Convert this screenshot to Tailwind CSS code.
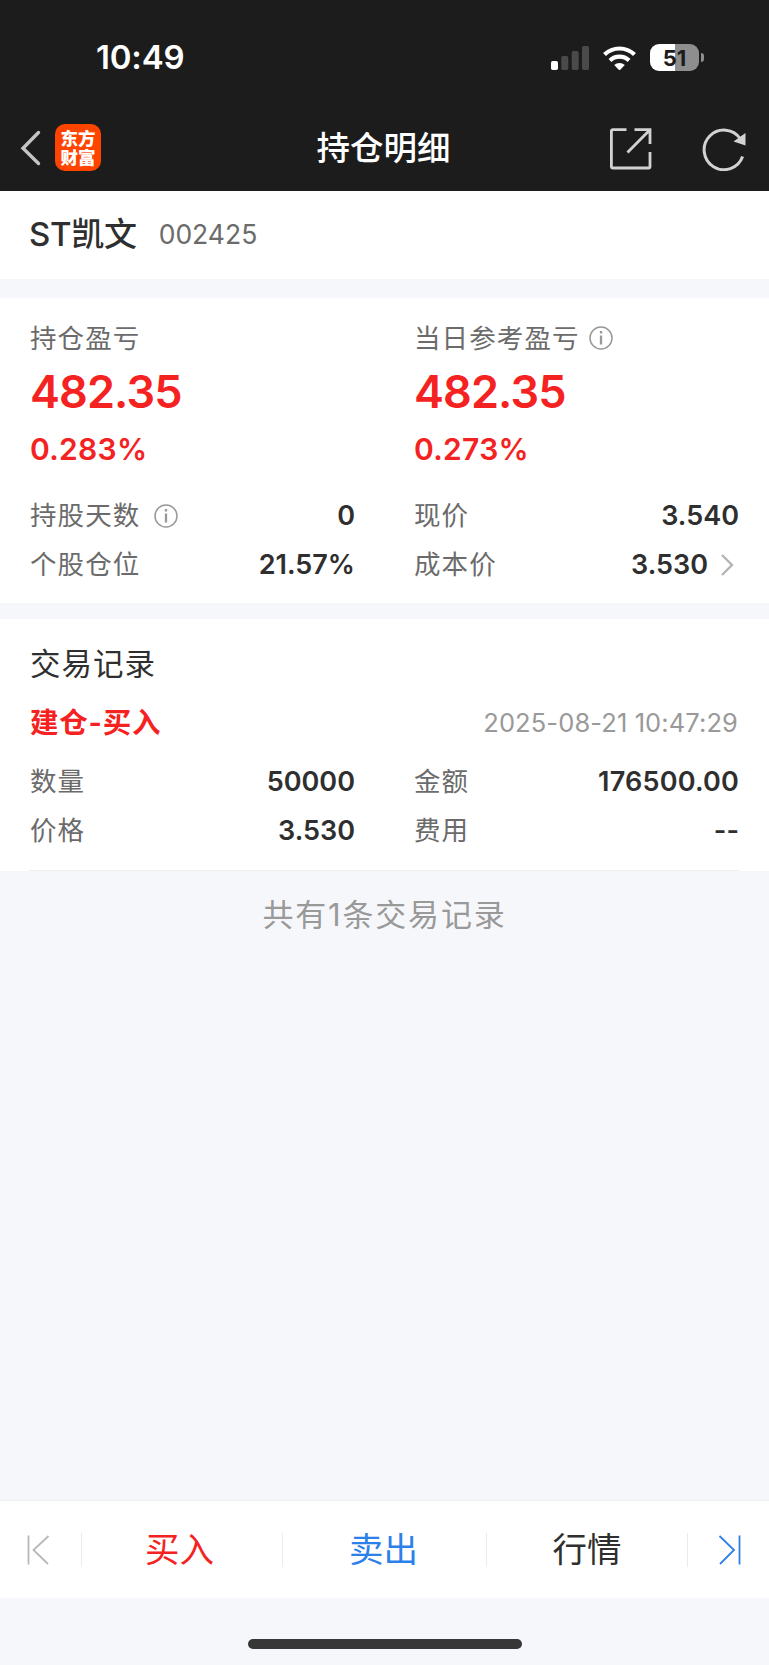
<!DOCTYPE html>
<html lang="zh-CN">

<head>
    <meta charset="UTF-8">
    <meta name="viewport" content="width=device-width, initial-scale=1.0">
    <title>持仓明细</title>
    <script src="https://cdn.jsdelivr.net/npm/@tailwindcss/browser@4"></script>
</head>

<body class="bg-[#f6f7fa]">
    <div class="flex flex-col w-[769px] h-[1665px] overflow-hidden bg-[#f6f7fa] text-[#2f2f2f] leading-none font-[Inter,'Noto_Sans_CJK_SC',sans-serif]">
        <header class="h-[191px] bg-[#1c1c1c] text-white">
            <!-- 状态栏 -->
            <div class="flex items-center justify-between h-[105px] pt-[10px] pl-[96px] pr-[65px]">
                <span class="text-[33px] font-semibold tracking-[-0.2px]">10:49</span>
                <div class="flex items-center">
                    <svg width="38" height="24" viewBox="0 0 38 24">
                        <rect x="0" y="15" width="7" height="9" rx="1.8" fill="#fff" />
                        <rect x="10.3" y="10" width="7" height="14" rx="1.8" fill="#4a4a4a" />
                        <rect x="20.7" y="5" width="7" height="19" rx="1.8" fill="#4a4a4a" />
                        <rect x="31" y="0" width="7" height="24" rx="1.8" fill="#4a4a4a" />
                    </svg>
                    <svg class="ml-[14px]" width="33" height="24" viewBox="0 0 33 24" fill="none" stroke="#fff" stroke-width="4.2">
                        <path d="M1.5 8.6A21.5 21.5 0 0 1 31.5 8.6" />
                        <path d="M7 14.4A13.6 13.6 0 0 1 26 14.4" />
                        <path d="M16.5 24.5L11.2 19.1A7.8 7.8 0 0 1 21.8 19.1Z" fill="#fff" stroke="none" />
                    </svg>
                    <div class="ml-[14px] flex items-center justify-center w-[49px] h-[27px] rounded-[9px] bg-linear-to-r from-white from-51% to-[#8e8e8e] to-51% text-[#1c1c1c] text-[22px] font-bold">51</div>
                    <div class="ml-[2px] w-[3px] h-[9px] rounded-r-full bg-[#8e8e8e]"></div>
                </div>
            </div>
            <!-- 标题栏 -->
            <div class="grid grid-cols-3 items-center h-[86px] pl-[20px] pr-[22px]">
                <div class="flex items-center">
                    <svg width="21" height="36" viewBox="0 0 21 36" fill="none" stroke="#c4c4c4" stroke-width="3.4" stroke-linecap="round">
                        <path d="M18.5 2.5L3 18.3L18.5 33.5" />
                    </svg>
                    <div class="ml-[14px] -mt-px flex flex-col items-center justify-center w-[46px] h-[47px] rounded-[10px] bg-[#ff4400] text-[17.5px] leading-[19px] font-black">
                        <span>东方</span>
                        <span>财富</span>
                    </div>
                </div>
                <h1 class="pt-px text-center text-[33.5px] font-medium">持仓明细</h1>
                <div class="flex items-center justify-end gap-[49px] pt-px">
                    <svg width="44" height="44" viewBox="0 0 44 44" fill="none" stroke="#d2d2d2" stroke-width="2.8">
                        <path d="M18.5 2.7H5Q3.4 2.7 3.4 4.3V39.5Q3.4 41 5 41H40.5Q42 41 42 39.5V25M42 17V2.7H26.5M42 2.7L19.5 25.5" />
                    </svg>
                    <svg width="46" height="44" viewBox="0 0 46 44" fill="none" stroke="#d2d2d2" stroke-width="3">
                        <path d="M41.6 29.5A19.8 19.8 0 1 1 39.5 12" />
                        <path d="M44.5 6V18.5L32.5 14.5Z" fill="#d2d2d2" stroke="none" />
                    </svg>
                </div>
            </div>
        </header>

        <!-- 股票名称 -->
        <section class="flex items-center h-[88px] pb-[2px] pl-[29px] bg-white">
            <h2 class="text-[33px] font-medium tracking-[-0.3px]">ST凯文</h2>
            <span class="ml-[22px] text-[26.5px] text-[#6b6b6b]">002425</span>
        </section>

        <!-- 盈亏 -->
        <section class="grid grid-cols-2 gap-x-[59px] mt-[19px] pt-5 pb-[14px] pl-[30px] pr-[30px] bg-white text-[27px]">
            <div>
                <div class="flex items-center h-10 pt-px text-[26.5px] text-[#6b6b6b] tracking-[1.1px]">持仓盈亏</div>
                <div class="flex items-center h-[68px] pb-[2px] text-[45px] font-semibold tracking-[-0.9px] text-[#f52222]">482.35</div>
                <div class="flex items-center h-[46px] text-[30px] font-semibold tracking-[0.3px] text-[#f52222]">0.283%</div>
                <div class="flex items-center justify-between h-[49px] mt-[19px]">
                    <span class="flex items-center text-[26.5px] text-[#6b6b6b] tracking-[1.1px]">持股天数
                        <svg class="ml-[14px]" width="24" height="24" viewBox="0 0 24 24" fill="none" stroke="#999" stroke-width="1.5">
                            <circle cx="12" cy="12" r="11" />
                            <path d="M12 9.5V18.5M12 5V7.5" stroke-width="2.3" />
                        </svg>
                    </span>
                    <span class="font-semibold">0</span>
                </div>
                <div class="flex items-center justify-between h-[49px]">
                    <span class="text-[26.5px] text-[#6b6b6b] tracking-[1.1px]">个股仓位</span>
                    <span class="font-semibold">21.57%</span>
                </div>
            </div>
            <div>
                <div class="flex items-center h-10 pt-px text-[26.5px] text-[#6b6b6b] tracking-[1.1px]">当日参考盈亏
                    <svg class="ml-[9px] -mt-px" width="24" height="24" viewBox="0 0 24 24" fill="none" stroke="#999" stroke-width="1.5">
                        <circle cx="12" cy="12" r="11" />
                        <path d="M12 9.5V18.5M12 5V7.5" stroke-width="2.3" />
                    </svg>
                </div>
                <div class="flex items-center h-[68px] pb-[2px] text-[45px] font-semibold tracking-[-0.9px] text-[#f52222]">482.35</div>
                <div class="flex items-center h-[46px] text-[30px] font-semibold tracking-[0.3px] text-[#f52222]">0.273%</div>
                <div class="flex items-center justify-between h-[49px] mt-[19px]">
                    <span class="text-[26.5px] text-[#6b6b6b] tracking-[1.1px]">现价</span>
                    <span class="font-semibold">3.540</span>
                </div>
                <div class="flex items-center justify-between h-[49px]">
                    <span class="text-[26.5px] text-[#6b6b6b] tracking-[1.1px]">成本价</span>
                    <span class="flex items-center font-semibold">3.530
                        <svg class="ml-[12px] mr-[5px]" width="14" height="22" viewBox="0 0 14 22" fill="none" stroke="#b4b4b4" stroke-width="2.4">
                            <path d="M2 1L12 11L2 21" />
                        </svg>
                    </span>
                </div>
            </div>
        </section>

        <!-- 交易记录 -->
        <section class="mt-4 h-[252px] pl-[30px] pr-[30px] bg-white text-[27px]">
            <h3 class="flex items-center h-[90px] text-[30.5px] tracking-[1px]">交易记录</h3>
            <div class="flex items-center justify-between h-7">
                <span class="pt-px text-[28.5px] font-bold tracking-[0.8px] text-[#f52222]">建仓-买入</span>
                <span class="pr-px text-[25.5px] tracking-[0.1px] text-[#999]">2025-08-21 10:47:29</span>
            </div>
            <div class="grid grid-cols-2 gap-x-[59px] mt-[19px] -mx-px px-px pt-px h-[115px] content-start border-b border-[#eeeff1]">
                <div class="flex items-center justify-between h-[49px]">
                    <span class="text-[26.5px] text-[#6b6b6b] tracking-[1.1px]">数量</span>
                    <span class="font-semibold">50000</span>
                </div>
                <div class="flex items-center justify-between h-[49px]">
                    <span class="text-[26.5px] text-[#6b6b6b] tracking-[1.1px]">金额</span>
                    <span class="font-semibold tracking-[0.2px]">176500.00</span>
                </div>
                <div class="flex items-center justify-between h-[49px]">
                    <span class="text-[26.5px] text-[#6b6b6b] tracking-[1.1px]">价格</span>
                    <span class="font-semibold">3.530</span>
                </div>
                <div class="flex items-center justify-between h-[49px]">
                    <span class="text-[26.5px] text-[#6b6b6b] tracking-[1.1px]">费用</span>
                    <span class="font-semibold">--</span>
                </div>
            </div>
        </section>
        <p class="flex items-center justify-center h-[86px] text-[31px] tracking-[1.8px] text-[#999]">共有1条交易记录</p>

        <!-- 底部操作栏 -->
        <nav class="flex items-center mt-auto h-[98px] border-t border-[#eeeff1] bg-white text-[34.5px]">
            <a href="#" class="flex w-[81px] pl-[27px]">
                <svg width="23" height="30" viewBox="0 0 23 30" fill="none" stroke="#b8b8b8" stroke-width="1.8">
                    <path d="M1.5 0.5V29.5M21.5 1L6.5 15L21 29" />
                </svg>
            </a>
            <a href="#" class="flex items-center justify-center w-[201px] h-[34px] pr-[5px] pt-px border-l border-[#ebebeb] text-[#f52222]">买入</a>
            <a href="#" class="flex items-center justify-center w-[204px] h-[34px] pr-[2px] pt-px border-l border-[#ebebeb] text-[#2d7fea]">卖出</a>
            <a href="#" class="flex items-center justify-center w-[201px] h-[34px] pt-px border-l border-[#ebebeb]">行情</a>
            <a href="#" class="flex items-center w-[82px] h-[34px] pl-[30px] border-l border-[#ebebeb]">
                <svg width="23" height="30" viewBox="0 0 23 30" fill="none" stroke="#2d7fea" stroke-width="1.8">
                    <path d="M21.5 0.5V29.5M1.5 1L16 15L2 29" />
                </svg>
            </a>
        </nav>
        <div class="flex justify-center h-[67px] pt-[41px]">
            <div class="w-[274px] h-[10px] rounded-full bg-[#373737]"></div>
        </div>
    </div>
</body>

</html>
